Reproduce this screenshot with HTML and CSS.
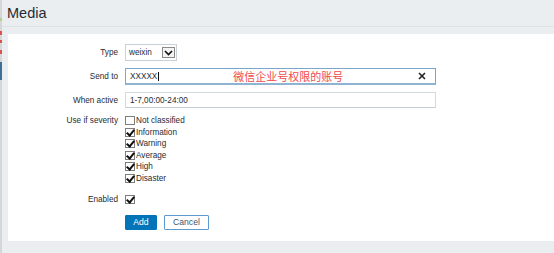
FILE: index.html
```html
<!DOCTYPE html>
<html lang="en">
<head>
    <meta charset="UTF-8">
    <title>Media</title>
    <link rel="stylesheet" href="styles.css">
</head>
<body>
    <div class="edge"></div>
    <div class="page">
        <div class="header">
            <h1>Media</h1>
        </div>

        <div class="panel">
            <div class="form-row">
                <label class="form-label">Type</label>
                <div class="select">
                    <span class="select-value">weixin</span>
                    <span class="select-button">
                        <svg width="9" height="6" viewBox="0 0 9 6"><path d="M1 1 L4.5 4.5 L8 1" fill="none" stroke="#111" stroke-width="1.6"/></svg>
                    </span>
                </div>
            </div>

            <div class="form-row">
                <label class="form-label">Send to</label>
                <div class="text-input focused">
                    <span class="input-value">XXXXX</span><span class="caret"></span>
                    <span class="note">微信企业号权限的账号</span>
                    <span class="clear">
                        <svg width="8" height="8" viewBox="0 0 8 8"><path d="M1 1 L7 7 M7 1 L1 7" stroke="#222" stroke-width="1.6"/></svg>
                    </span>
                </div>
            </div>

            <div class="form-row">
                <label class="form-label">When active</label>
                <div class="text-input">
                    <span class="input-value">1-7,00:00-24:00</span>
                </div>
            </div>

            <div class="form-row severity-row">
                <label class="form-label">Use if severity</label>
                <ul class="check-list">
                    <li><span class="check"></span>Not classified</li>
                    <li><span class="check checked"></span>Information</li>
                    <li><span class="check checked"></span>Warning</li>
                    <li><span class="check checked"></span>Average</li>
                    <li><span class="check checked"></span>High</li>
                    <li><span class="check checked"></span>Disaster</li>
                </ul>
            </div>

            <div class="form-row enabled-row">
                <label class="form-label">Enabled</label>
                <div class="check-single"><span class="check checked"></span></div>
            </div>

            <div class="form-row buttons-row">
                <span class="form-label"></span>
                <div class="buttons">
                    <button class="btn btn-primary">Add</button>
                    <button class="btn btn-alt">Cancel</button>
                </div>
            </div>
        </div>
    </div>
</body>
</html>
```

FILE: styles.css
```css
html, body {
    margin: 0;
    padding: 0;
}
body {
    display: flex;
    width: 554px;
    height: 253px;
    overflow: hidden;
    background-color: #ebeef0;
    font-family: 'Liberation Sans', Arial, sans-serif;
    color: #1f2c33;
}
.edge {
    width: 2px;
    flex: none;
    background: linear-gradient(to bottom,
        #d6d6d6 0, #d6d6d6 18px, #b6d38a 18px, #b6d38a 21px,
        #d6d6d6 21px, #d6d6d6 31px, #d9534f 31px, #d9534f 35px,
        #d6d6d6 35px, #d6d6d6 40px, #d9534f 40px, #d9534f 43px,
        #d6d6d6 43px, #d6d6d6 50px, #d9534f 50px, #d9534f 54px,
        #d6d6d6 54px, #d6d6d6 62px, #3f6f95 62px, #3f6f95 80px,
        #d6d6d6 80px);
}
.page {
    flex: 1;
    display: flex;
    flex-direction: column;
}
.header {
    height: 26px;
    padding-left: 5px;
    border-bottom: 1px solid #dde2e5;
    margin-bottom: 7px;
}
.header h1 {
    margin: 0;
    font-size: 14.5px;
    font-weight: normal;
    line-height: 27px;
}
.panel {
    margin-left: 6px;
    height: 207px;
    box-sizing: border-box;
    padding-top: 10px;
    background-color: #fff;
    font-size: 8.2px;
}
.form-row {
    display: flex;
    align-items: center;
    margin-bottom: 7px;
}
.form-label {
    width: 110px;
    margin-right: 7px;
    text-align: right;
    flex: none;
}
.select {
    width: 52px;
    height: 17px;
    box-sizing: border-box;
    border: 1px solid #c9d1d6;
    display: flex;
    align-items: center;
    justify-content: space-between;
    padding: 0 1px 0 3px;
}
.select-button {
    width: 13px;
    height: 11px;
    box-sizing: border-box;
    border: 1px solid #8a8a8a;
    background: #f4f4f4;
    display: flex;
    align-items: center;
    justify-content: center;
}
.text-input {
    width: 311px;
    height: 16px;
    box-sizing: border-box;
    border: 1px solid #d3dadd;
    border-bottom-color: #c4cdd2;
    display: flex;
    align-items: center;
    padding: 0 4px;
}
.text-input.focused {
    border: 1px solid #7ba7cb;
    border-bottom: 2px solid #8fb3d2;
    height: 17px;
}
.caret {
    width: 1px;
    height: 9px;
    background: #111;
    margin-left: 1px;
}
.note {
    margin-left: 74px;
    color: #f04a4a;
    font-size: 11px;
    font-family: 'Noto Sans CJK SC', sans-serif;
    line-height: 12px;
}
.clear {
    margin-left: auto;
    margin-right: 5px;
    display: flex;
}
.severity-row {
    align-items: flex-start;
    margin-bottom: 9px;
}
.severity-row .form-label {
    line-height: 11.5px;
}
.check-list {
    list-style: none;
    margin: 0;
    padding: 0;
}
.check-list li {
    display: flex;
    align-items: center;
    height: 11.5px;
}
.check {
    width: 10px;
    height: 9px;
    box-sizing: border-box;
    border: 1px solid #7d7d7d;
    background: #fff;
    margin-right: 1px;
    position: relative;
}
.check.checked::after {
    content: '';
    position: absolute;
    left: 2px;
    top: -1px;
    width: 3px;
    height: 6px;
    border-right: 2px solid #111;
    border-bottom: 2px solid #111;
    transform: rotate(40deg);
}
.enabled-row {
    height: 12px;
    margin-bottom: 10px;
}
.check-single {
    display: flex;
}
.buttons {
    display: flex;
    gap: 7px;
}
.btn {
    height: 15px;
    box-sizing: border-box;
    padding: 0;
    font-family: 'Liberation Sans', Arial, sans-serif;
    font-size: 8.6px;
    border-radius: 1px;
    cursor: pointer;
    line-height: 13px;
}
.btn-primary {
    width: 32px;
    background-color: #0275b8;
    border: 1px solid #0275b8;
    color: #fff;
}
.btn-alt {
    width: 45px;
    background-color: #fff;
    border: 1px solid #5e9acb;
    color: #3a5570;
}
```
